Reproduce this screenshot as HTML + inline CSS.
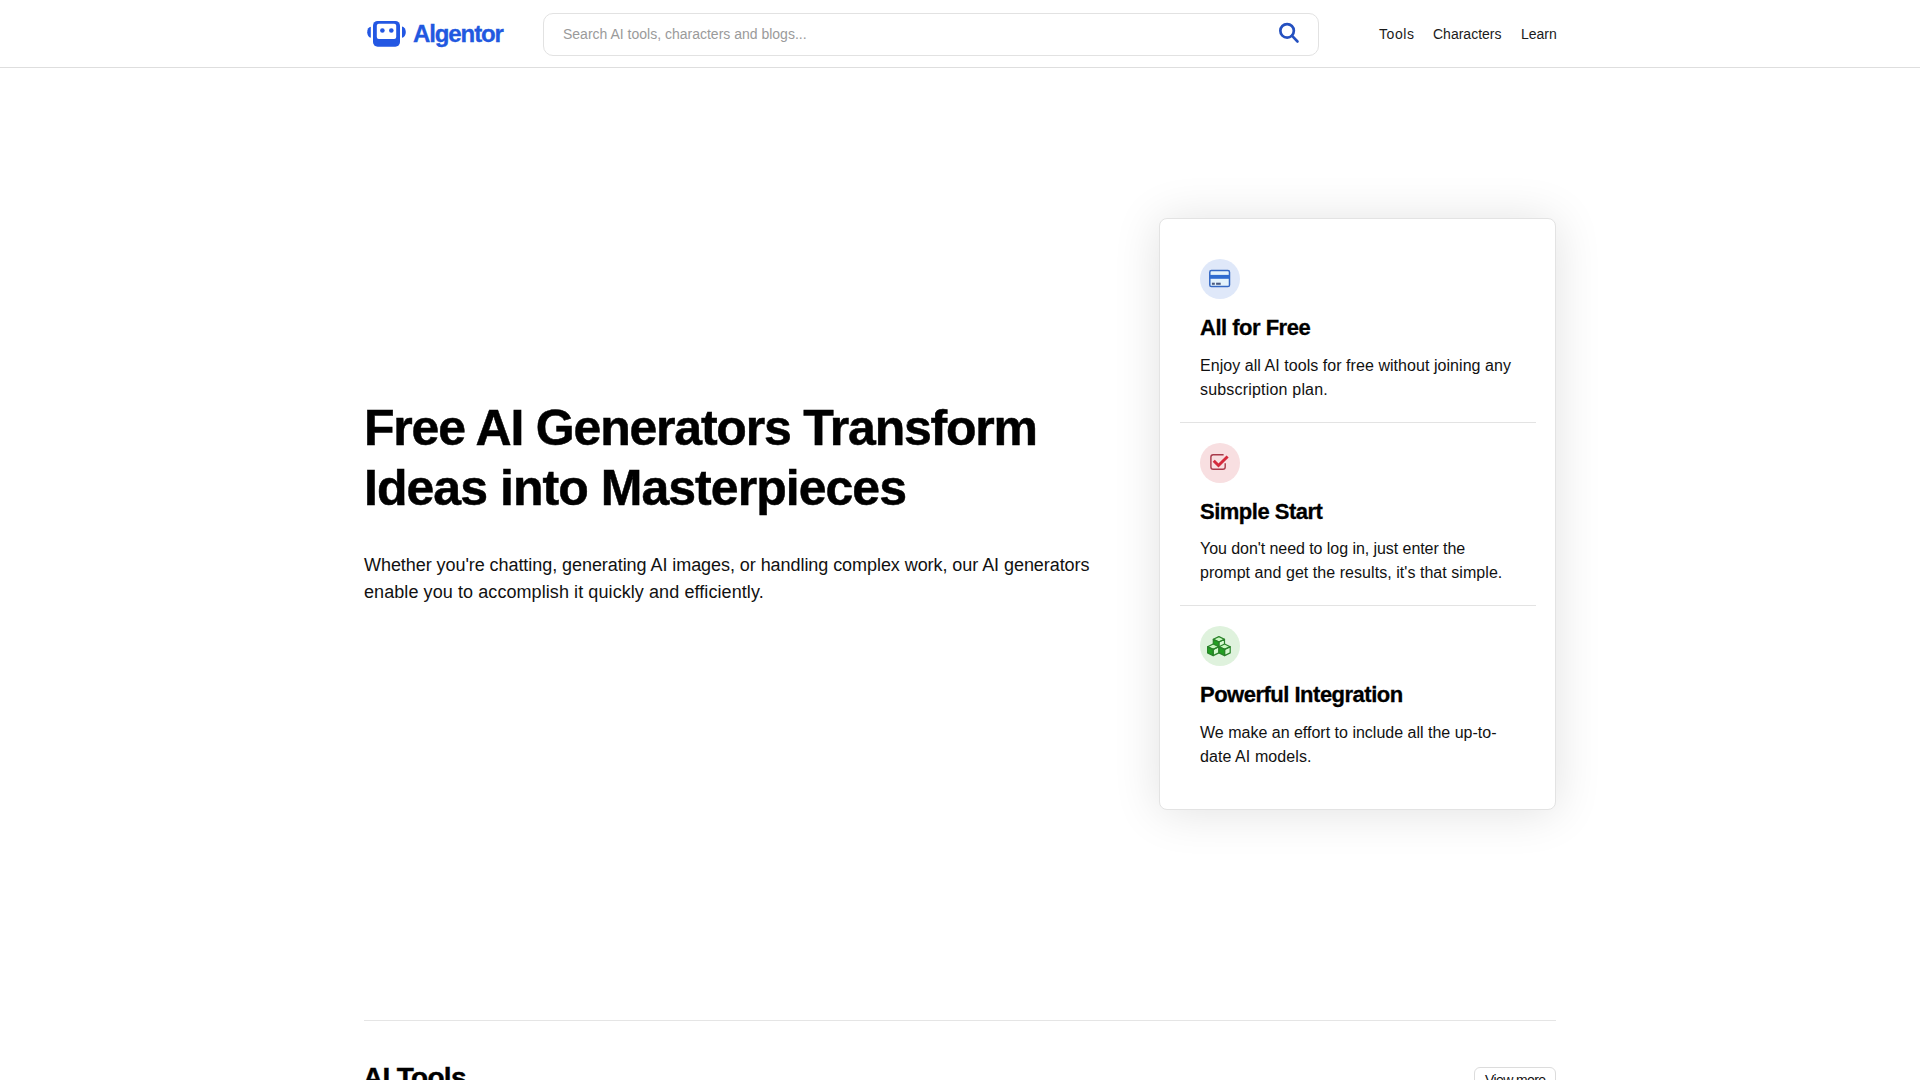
<!DOCTYPE html>
<html>
<head>
<meta charset="utf-8">
<style>
*{box-sizing:border-box;margin:0;padding:0}
html,body{width:1920px;height:1080px;overflow:hidden;background:#fff}
body{font-family:"Liberation Sans",sans-serif;color:#111;position:relative}
.abs{position:absolute;white-space:nowrap}
#hdr{position:absolute;left:0;top:0;width:1920px;height:68px;border-bottom:1px solid #dedede;background:#fff}
#logo{position:absolute;left:366px;top:19px;width:42px;height:30px}
#brand{position:absolute;left:413px;top:19px;font-size:24px;font-weight:bold;color:#2158e0;line-height:30px;letter-spacing:-1.1px;-webkit-text-stroke:0.3px #2158e0}
#search{position:absolute;left:543px;top:13px;width:776px;height:43px;border:1px solid #e2e2e2;border-radius:10px;background:#fff}
#ph{position:absolute;left:563px;top:25px;font-size:14px;line-height:18px;color:#9a9a9a}
#sicon{position:absolute;left:1275px;top:19px;width:28px;height:28px}
.nav{position:absolute;top:25px;font-size:14px;line-height:18px;color:#1a1a1a}
#h1{position:absolute;left:364px;top:398px;font-size:50px;line-height:60px;font-weight:bold;color:#000;white-space:nowrap;letter-spacing:-1.1px;-webkit-text-stroke:0.5px #000}
#lead{position:absolute;left:364px;top:552px;font-size:18px;line-height:27px;color:#111;white-space:nowrap}
#card{position:absolute;left:1159px;top:218px;width:397px;height:592px;border:1px solid #e3e3e3;border-radius:8px;background:#fff;box-shadow:0 2px 48px rgba(0,0,0,0.12)}
.circ{position:absolute;left:1200px;width:40px;height:40px;border-radius:50%}
.ttl{position:absolute;left:1200px;font-size:22px;line-height:28px;font-weight:bold;color:#000;white-space:nowrap;letter-spacing:-0.5px;-webkit-text-stroke:0.3px #000}
.desc{position:absolute;left:1200px;font-size:16px;line-height:24px;color:#111;white-space:nowrap}
.ico{position:absolute}
.div{position:absolute;left:1180px;width:356px;height:1px;background:#e3e3e3}
#hr2{position:absolute;left:364px;top:1020px;width:1192px;height:1px;background:#e5e5e5}
#h2{position:absolute;left:363px;top:1060px;font-size:28px;line-height:36px;font-weight:bold;color:#000;white-space:nowrap;letter-spacing:-0.7px;-webkit-text-stroke:0.4px #000}
#vm{position:absolute;left:1474px;top:1067px;width:82px;height:32px;border:1px solid #dcdcdc;border-radius:6px;font-size:14px;line-height:24px;padding-left:10px;letter-spacing:-0.6px;color:#111;white-space:nowrap}
</style>
</head>
<body>
<div id="hdr"></div>
<svg id="logo" viewBox="0 0 42 30">
  <rect x="7" y="2" width="27" height="25.7" rx="4.6" fill="#2357e3"/>
  <rect x="10.8" y="4.8" width="19.4" height="15.2" rx="2" fill="#fff"/>
  <circle cx="16.4" cy="11.5" r="2.3" fill="#2357e3"/>
  <circle cx="25.3" cy="11.5" r="2.3" fill="#2357e3"/>
  <path d="M4.8 7.7 A3.6 5.5 0 0 0 4.8 18.7 Z" fill="#2357e3"/>
  <path d="M36 7.5 A3.8 5.6 0 0 1 36 18.7 Z" fill="#2357e3"/>
</svg>
<div id="brand">Algentor</div>
<div id="search"></div>
<div id="ph">Search AI tools, characters and blogs...</div>
<svg id="sicon" viewBox="0 0 28 28">
  <circle cx="12.1" cy="11.85" r="6.75" fill="none" stroke="#2450c0" stroke-width="2.7"/>
  <path d="M16.9 16.7 L22.5 22.5" stroke="#2450c0" stroke-width="2.6" stroke-linecap="round"/>
</svg>
<div class="nav" style="left:1379px;letter-spacing:0.6px">Tools</div>
<div class="nav" style="left:1433px">Characters</div>
<div class="nav" style="left:1521px">Learn</div>

<div id="h1"><span style="letter-spacing:-1.21px">Free AI Generators Transform</span><br><span style="letter-spacing:-0.96px">Ideas into Masterpieces</span></div>
<div id="lead"><span style="letter-spacing:-0.06px">Whether you're chatting, generating AI images, or handling complex work, our AI generators</span><br><span style="letter-spacing:0.08px">enable you to accomplish it quickly and efficiently.</span></div>

<div id="card"></div>
<div class="circ" style="top:259px;background:#dfe8f9"></div>
<div class="ttl" style="top:314px">All for Free</div>
<div class="desc" style="top:354px"><span style="letter-spacing:0.05px">Enjoy all AI tools for free without joining any</span><br><span style="letter-spacing:0.19px">subscription plan.</span></div>
<div class="div" style="top:422px"></div>
<div class="circ" style="top:443px;background:#f8dfe1"></div>
<div class="ttl" style="top:498px">Simple Start</div>
<div class="desc" style="top:537px"><span style="letter-spacing:-0.06px">You don't need to log in, just enter the</span><br><span style="letter-spacing:0.05px">prompt and get the results, it's that simple.</span></div>
<div class="div" style="top:605px"></div>
<div class="circ" style="top:626px;background:#dff2dd"></div>
<div class="ttl" style="top:681px">Powerful Integration</div>
<div class="desc" style="top:721px"><span style="letter-spacing:0.0px">We make an effort to include all the up-to-</span><br><span style="letter-spacing:0.08px">date AI models.</span></div>

<svg class="ico" style="left:1200px;top:259px" width="40" height="40" viewBox="0 0 40 40">
  <rect x="9.8" y="11.6" width="19.7" height="16" rx="1.6" fill="#e4f3fc" stroke="#3569c4" stroke-width="1.5"/>
  <rect x="9.8" y="15.9" width="19.7" height="3.9" fill="#2f6cd0"/>
  <rect x="11.9" y="23.7" width="2.9" height="2.1" fill="#4a5a80"/>
  <rect x="16.1" y="23.7" width="4.6" height="2.1" fill="#4a5a80"/>
</svg>
<svg class="ico" style="left:1200px;top:443px" width="40" height="40" viewBox="0 0 40 40">
  <path d="M23.6 11.8 H13.2 A2.3 2.3 0 0 0 10.9 14.1 V23.9 A2.3 2.3 0 0 0 13.2 26.2 H22.9 A2.3 2.3 0 0 0 25.2 23.9 V20.2" fill="none" stroke="#a83a4a" stroke-width="1.4"/>
  <path d="M13.7 17.7 L18.5 22.5 L27.6 13.5" fill="none" stroke="#d42a3c" stroke-width="3"/>
</svg>
<svg class="ico" style="left:1200px;top:626px" width="40" height="40" viewBox="0 0 40 40"><polygon points="18.90,16.00 13.30,13.30 13.30,19.50 18.90,22.20" fill="#22a022"/><polygon points="18.90,16.00 13.30,13.30 18.90,10.60 24.50,13.30" fill="#c8f7c0"/><polygon points="18.90,16.00 24.50,13.30 24.50,19.50 18.90,22.20" fill="#d6f9d0"/><polygon points="18.90,16.00 13.30,13.30 13.30,19.50 18.90,22.20" fill="none" stroke="#2a822a" stroke-width="1.2" stroke-linejoin="round"/><polygon points="18.90,16.00 24.50,13.30 24.50,19.50 18.90,22.20" fill="none" stroke="#2a822a" stroke-width="1.2" stroke-linejoin="round"/><polygon points="18.90,16.00 13.30,13.30 18.90,10.60 24.50,13.30" fill="none" stroke="#2a822a" stroke-width="1.2" stroke-linejoin="round"/><polygon points="13.20,23.40 7.60,20.70 7.60,26.90 13.20,29.60" fill="#22a022"/><polygon points="13.20,23.40 7.60,20.70 13.20,18.00 18.80,20.70" fill="#c8f7c0"/><polygon points="13.20,23.40 18.80,20.70 18.80,26.90 13.20,29.60" fill="#d6f9d0"/><polygon points="13.20,23.40 7.60,20.70 7.60,26.90 13.20,29.60" fill="none" stroke="#2a822a" stroke-width="1.2" stroke-linejoin="round"/><polygon points="13.20,23.40 18.80,20.70 18.80,26.90 13.20,29.60" fill="none" stroke="#2a822a" stroke-width="1.2" stroke-linejoin="round"/><polygon points="13.20,23.40 7.60,20.70 13.20,18.00 18.80,20.70" fill="none" stroke="#2a822a" stroke-width="1.2" stroke-linejoin="round"/><polygon points="24.60,23.40 19.00,20.70 19.00,26.90 24.60,29.60" fill="#22a022"/><polygon points="24.60,23.40 19.00,20.70 24.60,18.00 30.20,20.70" fill="#c8f7c0"/><polygon points="24.60,23.40 30.20,20.70 30.20,26.90 24.60,29.60" fill="#d6f9d0"/><polygon points="24.60,23.40 19.00,20.70 19.00,26.90 24.60,29.60" fill="none" stroke="#2a822a" stroke-width="1.2" stroke-linejoin="round"/><polygon points="24.60,23.40 30.20,20.70 30.20,26.90 24.60,29.60" fill="none" stroke="#2a822a" stroke-width="1.2" stroke-linejoin="round"/><polygon points="24.60,23.40 19.00,20.70 24.60,18.00 30.20,20.70" fill="none" stroke="#2a822a" stroke-width="1.2" stroke-linejoin="round"/></svg>

<div id="hr2"></div>
<div id="h2">AI Tools</div>
<div id="vm">View more</div>
</body>
</html>
